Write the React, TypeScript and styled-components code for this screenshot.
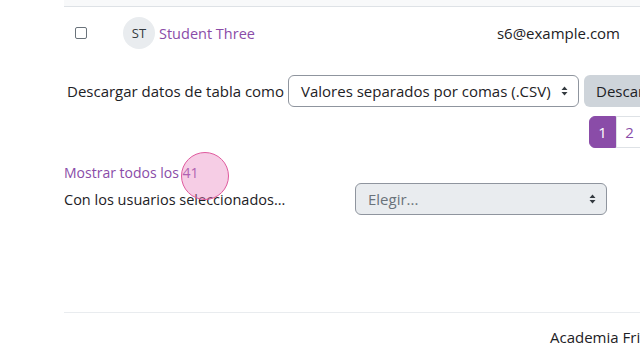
import styled, { createGlobalStyle } from "styled-components";

const GlobalStyle = createGlobalStyle`
  html, body {
    margin: 0;
    padding: 0;
    background: #fff;
    overflow: hidden;
  }
  body {
    font-family: "Open Sans", "Liberation Sans", sans-serif;
    font-size: 15px;
    color: #1d2125;
  }
`;

const Page = styled.div`
  width: 640px;
  height: 344px;
  overflow: hidden;
  position: relative;
`;
const Main = styled.div`
  margin-left: 64px;
  width: 640px;
`;
const HeadRow = styled.div`
  height: 6px;
  background: #f8f9fa;
  border-bottom: 1px solid #dee2e6;
`;
const Row = styled.div`
  display: flex;
  align-items: center;
  height: 52px;
`;
const CheckCell = styled.div`
  width: 59px;
  padding-left: 11px;
  box-sizing: border-box;
  display: flex;
  align-items: center;
`;
const Check = styled.span`
  width: 10px;
  height: 10px;
  border: 1px solid #6a737b;
  border-radius: 2px;
`;
const Avatar = styled.span`
  width: 32px;
  height: 32px;
  border-radius: 50%;
  background: #e9ecef;
  color: #343a40;
  display: flex;
  align-items: center;
  justify-content: center;
  font-size: 13px;
  margin-right: 4px;
`;
const Name = styled.a`
  color: #8a4ca8;
  text-decoration: none;
  font-size: 14.5px;
`;
const Email = styled.div`
  margin-left: auto;
  margin-right: 84px;
`;
const DownloadForm = styled.div`
  display: flex;
  align-items: center;
  margin-top: 16px;
  padding-left: 3px;
`;
const Label = styled.span<{ w?: number }>`
  width: ${(p) => (p.w ? `${p.w}px` : "auto")};
  flex-shrink: 0;
`;
const BulkLabel = styled(Label)`
  font-size: 14.5px;
`;
const Select = styled.div<{ disabled?: boolean }>`
  display: flex;
  align-items: center;
  justify-content: space-between;
  box-sizing: border-box;
  height: 32px;
  padding: 0 10px 0 12px;
  border: 1px solid #8f959e;
  border-radius: 6px;
  background: ${(p) => (p.disabled ? "#e9ecef" : "#fff")};
  color: ${(p) => (p.disabled ? "#6a737b" : "#1d2125")};
  flex-shrink: 0;
`;
const Arrows = styled.svg`
  width: 7px;
  height: 10px;
  margin-left: 8px;
`;
const Button = styled.div`
  margin-left: 5px;
  height: 32px;
  display: flex;
  align-items: center;
  padding: 0 12px;
  background: #ced4da;
  border-radius: 6px;
  flex-shrink: 0;
`;
const Pager = styled.div`
  display: flex;
  margin-top: 9px;
  padding-left: 525px;
`;
const PageItem = styled.span<{ active?: boolean }>`
  width: 27px;
  height: 32px;
  box-sizing: border-box;
  display: flex;
  align-items: center;
  justify-content: center;
  background: ${(p) => (p.active ? "#8a4ca8" : "#fff")};
  color: ${(p) => (p.active ? "#fff" : "#8a4ca8")};
  border: 1px solid ${(p) => (p.active ? "#8a4ca8" : "#dee2e6")};
  border-radius: ${(p) => (p.active ? "6px 0 0 6px" : "0")};
  flex-shrink: 0;
`;
const ShowAll = styled.div`
  margin-top: 15px;
  color: #8a4ca8;
  font-size: 14px;
  position: relative;
  display: inline-block;
`;
const Ripple = styled.span`
  position: absolute;
  left: 117px;
  top: -11px;
  width: 46px;
  height: 46px;
  border-radius: 50%;
  background: rgba(232, 130, 190, 0.4);
  border: 1px solid #e05a9e;
`;
const BulkRow = styled.div`
  display: flex;
  align-items: center;
  margin-top: 1px;
`;
const Footer = styled.div`
  margin-top: 97px;
  border-top: 1px solid #e9ecef;
  padding-top: 14px;
  padding-left: 486px;
  white-space: nowrap;
`;

function UpDown() {
  return (
    <Arrows viewBox="0 0 7 10">
      <path d="M3.5 0.5L6.5 4H0.5Z M3.5 9.5L6.5 6H0.5Z" fill="#343a40" />
    </Arrows>
  );
}

export default function App() {
  return (
    <Page>
      <GlobalStyle />
      <Main>
        <HeadRow />
        <Row>
          <CheckCell>
            <Check />
          </CheckCell>
          <Avatar>ST</Avatar>
          <Name>Student Three</Name>
          <Email>s6@example.com</Email>
        </Row>
        <DownloadForm>
          <Label>Descargar datos de tabla como</Label>
          <Select style={{ width: 291, marginLeft: 4 }}>
            Valores separados por comas (.CSV)
            <UpDown />
          </Select>
          <Button>Descargar</Button>
        </DownloadForm>
        <Pager>
          <PageItem active>1</PageItem>
          <PageItem>2</PageItem>
        </Pager>
        <ShowAll>
          Mostrar todos los 41
          <Ripple />
        </ShowAll>
        <BulkRow>
          <BulkLabel w={291}>Con los usuarios seleccionados...</BulkLabel>
          <Select disabled style={{ width: 252 }}>
            Elegir...
            <UpDown />
          </Select>
        </BulkRow>
        <Footer>Academia Fri</Footer>
      </Main>
    </Page>
  );
}
